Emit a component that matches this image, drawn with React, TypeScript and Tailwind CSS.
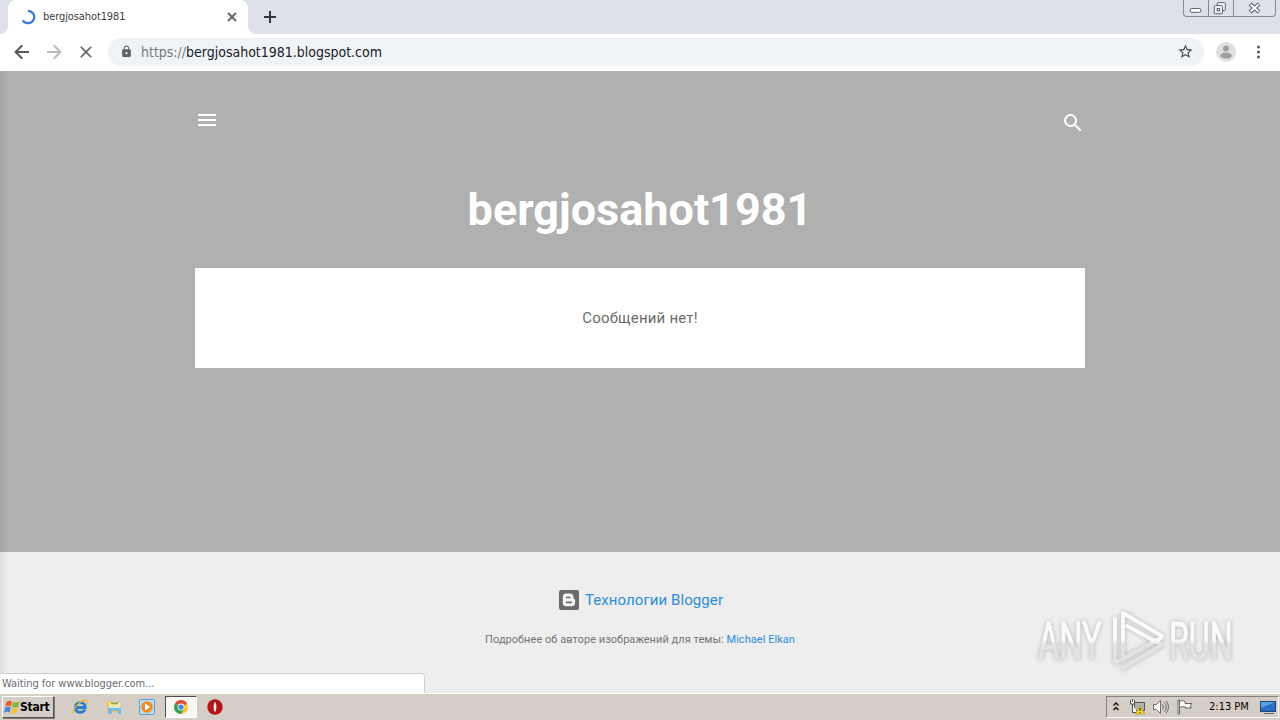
import React from 'react';
import clsx from 'clsx';
import { MdClose, MdLock, MdMenu, MdSearch, MdStarBorder } from 'react-icons/md';

const UI_FONT = "font-['DejaVu_Sans_Condensed','DejaVu_Sans',sans-serif]";

const TabStrip: React.FC = () => (
  <div className="flex h-[34px] bg-[#dee1e8]">
    <div className="w-2 bg-white">
      <div className="h-full rounded-br-lg bg-[#dee1e8]" />
    </div>
    <div className="flex w-[240px] items-center rounded-t-lg bg-white pl-3 pr-[11px]">
      <svg className="h-4 w-4" viewBox="0 0 16 16" fill="none">
        <path d="M8 1.800a6.200 6.200 0 1 1-5.200 9.600" stroke="#3b78d8" strokeWidth="2.200" />
      </svg>
      <span className="ml-[7px] flex-1 pt-px text-[11px] tracking-[-0.1px] text-[#3c4043]">bergjosahot1981</span>
      <svg className="h-[10px] w-[10px]" viewBox="0 0 10 10">
        <path d="M1 1l8 8M9 1L1 9" stroke="#5f6368" strokeWidth="1.800" />
      </svg>
    </div>
    <div className="w-2 bg-white">
      <div className="h-full rounded-bl-lg bg-[#dee1e8]" />
    </div>
    <svg className="ml-[8px] mt-[11px] h-3 w-3" viewBox="0 0 12 12">
      <path d="M6 0v12M0 6h12" stroke="#33363d" strokeWidth="2" />
    </svg>
    <div className="ml-auto mr-1 flex h-[17px] w-[93px] rounded-b-[4px] border border-t-0 border-[#858990]">
      <div className="w-[25px] border-r border-[#858990]">
        <svg className="h-4 w-full" viewBox="0 0 25 16" fill="none">
          <rect x="6.500" y="8.500" width="11" height="4" rx="1.500" fill="#fff" stroke="#555a66" />
        </svg>
      </div>
      <div className="w-[25px] border-r border-[#858990]">
        <svg className="h-4 w-full" viewBox="0 0 25 16" stroke="#555a66" fill="#f5f6f8">
          <rect x="8.500" y="2.500" width="8.500" height="8" rx="1" />
          <rect x="5.500" y="5.500" width="8.500" height="8.500" rx="1" />
          <rect x="8.500" y="8.500" width="2.500" height="2.500" />
        </svg>
      </div>
      <svg className="h-4 flex-1" viewBox="0 0 41 16">
        <path d="M16 4l9 8M25 4l-9 8" stroke="#555a66" strokeWidth="4.200" />
        <path d="M16.500 4.500l8 7M24.500 4.500l-8 7" stroke="#fff" strokeWidth="2.200" />
      </svg>
    </div>
  </div>
);

const Toolbar: React.FC = () => (
  <div className="flex h-[37px] items-center bg-white pb-0.5 pl-3">
    <svg className="h-5 w-5" viewBox="0 0 20 20" fill="none">
      <path d="M17 10H4M10.300 3.300L3.600 10l6.700 6.700" stroke="#55585c" strokeWidth="2" />
    </svg>
    <svg className="ml-3 h-5 w-5" viewBox="0 0 20 20" fill="none">
      <path d="M3 10h13M9.700 3.300l6.700 6.700-6.700 6.700" stroke="#b9bbbe" strokeWidth="2" />
    </svg>
    <MdClose className="ml-3 h-5 w-5 text-[#5f6368]" />
    <div className="ml-3 flex h-7 w-[1096px] items-center rounded-full bg-[#f0f3f6] pl-3 pr-[10px]">
      <MdLock className="h-[13px] w-[13px] text-[#5f6368]" />
      <span className="ml-2 flex-1 pt-px text-[14px] tracking-[-0.01px] text-[#202124]">
        <span className="text-[#777b80]">https://</span>bergjosahot1981.blogspot.com
      </span>
      <MdStarBorder className="h-[17px] w-[17px] text-[#45484d]" />
    </div>
    <svg className="ml-[12px] h-5 w-5" viewBox="0 0 20 20">
      <circle cx="10" cy="10" r="10" fill="#dfe0e1" />
      <circle cx="10" cy="6.500" r="3" fill="#9d9fa1" />
      <ellipse cx="10" cy="13.600" rx="5.800" ry="3" fill="#9d9fa1" />
    </svg>
    <svg className="ml-[19px] h-[14px] w-[6px]" viewBox="0 0 6 14" fill="#55585d">
      <circle cx="3.500" cy="2" r="1.500" />
      <circle cx="3.500" cy="7" r="1.500" />
      <circle cx="3.500" cy="12" r="1.500" />
    </svg>
  </div>
);

const Watermark: React.FC = () => (
  <svg
    className="absolute left-[1030px] top-[602px] h-[76px] w-[212px] overflow-visible drop-shadow-[0_0_2px_rgba(0,0,0,0.25)]"
    viewBox="0 0 212 76"
    fill="none"
  >
    <defs>
      <linearGradient id="wm-mark" x1="0" y1="0" x2="0" y2="76" gradientUnits="userSpaceOnUse">
        <stop offset="0.500" stopColor="#fafafa" />
        <stop offset="0.560" stopColor="#e2e2e2" />
      </linearGradient>
      {/* same split as wm-mark, measured from the text baseline */}
      <linearGradient id="wm-text" x1="0" y1="-57" x2="0" y2="19" gradientUnits="userSpaceOnUse">
        <stop offset="0.500" stopColor="#fafafa" />
        <stop offset="0.560" stopColor="#e2e2e2" />
      </linearGradient>
    </defs>
    <g fill="url(#wm-text)" stroke="url(#wm-text)" fontFamily="Roboto, sans-serif" fontSize="51">
      <text transform="translate(8 57) scale(0.650 1)" textLength="98" lengthAdjust="spacingAndGlyphs">ANY</text>
      <text transform="translate(139 57) scale(0.650 1)" textLength="98" lengthAdjust="spacingAndGlyphs">RUN</text>
    </g>
    <path
      d="M93 54V11l39 23M85 17v44l46-25M93 66l39-23-35-19"
      stroke="url(#wm-mark)"
      strokeWidth="4"
      strokeLinecap="round"
      strokeLinejoin="round"
    />
  </svg>
);

const BlogPage: React.FC = () => (
  <div className="relative flex h-[622px] flex-col font-['Roboto',sans-serif]">
    <main className="h-[481px] bg-[#b0b0b0]">
      <div className="mx-auto w-[890px]">
        <div className="flex h-[115px] items-start justify-between pt-[37px] text-white">
          <MdMenu className="h-6 w-6" />
          <MdSearch className="mt-[3px] h-6 w-6" />
        </div>
        <h1 className="h-[82px] text-center text-[45px] font-bold leading-[48px] text-white">bergjosahot1981</h1>
        <div className="flex h-[100px] items-center justify-center bg-white text-[15px] tracking-[0.2px] text-[#6b6b6b]">
          Сообщений нет!
        </div>
      </div>
    </main>
    <footer className="flex flex-1 flex-col items-center bg-[#eee] pt-9">
      <div className="flex h-6 items-center text-[15px] tracking-[0.08px] text-[#2c8dd8]">
        <svg className="mr-[4px] h-6 w-6" viewBox="0 0 24 24">
          <rect x="2" y="2" width="20" height="20" rx="2" fill="#6b6b6b" />
          <path d="M9 5.500h4a3.500 3.500 0 0 1 3.500 3.500v1c0 .7.300 1 .9 1.100.500.100.700.400.700.900v2.500a3.700 3.700 0 0 1-3.700 3.700H9.300a3.500 3.500 0 0 1-3.500-3.500V8.800A3.300 3.300 0 0 1 9 5.500z" fill="#f3f3f3" />
          <path d="M9.700 9.500h3M9.700 14.300h4.600" stroke="#6b6b6b" strokeWidth="1.700" strokeLinecap="round" />
        </svg>
        <span>Технологии Blogger</span>
      </div>
      <p className="mt-5 text-[11px] leading-4 tracking-[0.04px] text-[#757575]">
        Подробнее об авторе изображений для темы: <span className="text-[#2c8dd8]">Michael Elkan</span>
      </p>
    </footer>
    <div className="absolute inset-y-0 left-0 w-2 bg-linear-to-r from-black/6 to-transparent" />
    <div
      className={clsx(
        'absolute bottom-0 left-0 flex h-5 w-[425px] items-center rounded-tr border-r border-t border-[#cfcfcf] bg-white pl-[2px] pt-px text-[11px] tracking-[-0.05px] text-[#6a6c70]',
        UI_FONT
      )}
    >
      Waiting for www.blogger.com...
    </div>
  </div>
);

const WindowsLogo: React.FC = () => (
  <svg className="h-4 w-4" viewBox="0 0 16 16">
    <path d="M2.500 3Q5 1 8 2.500L7 7.500Q4 6 1.200 8z" fill="#e8602c" />
    <path d="M9 3q3 1.300 6.500-.5L14 7.700Q11 9.300 8 8z" fill="#83b83e" />
    <path d="M1 9q3-2 5.800-.5l-1 5Q3 12 0 14z" fill="#4787d5" />
    <path d="M7.800 9q3 1.300 6-.4l-1.200 5.200Q10 15.500 6.800 14z" fill="#f6c52f" />
  </svg>
);

const InternetExplorer: React.FC = () => (
  <svg className="h-4 w-4" viewBox="0 0 16 16" fill="none">
    <path d="M3.500 8.500h9.700c0-6.500-9.700-6.500-9.700 0 0 6 7.500 6 9.300 2" stroke="#257fce" strokeWidth="2.900" />
    <path d="M1.500 14.500C-1 12 9-.5 14.500 1.500c1.200.7.500 2.500-.5 4" stroke="#e9b42c" strokeWidth="1.300" />
  </svg>
);

const Explorer: React.FC = () => (
  <svg className="h-4 w-4" viewBox="0 0 16 16">
    <path d="M1 2h5l1 1h6v10H1z" fill="#e9c95b" />
    <path d="M3 4h11v8H3z" fill="#f9e99b" />
    <path d="M5 4.500h7" stroke="#76ad67" strokeWidth="1.500" />
    <path d="M2 8h13v7h-3v-3H6v3H2z" fill="#7ab9df" />
    <path d="M2.500 8.500h12" stroke="#c7e6f5" />
  </svg>
);

const MediaPlayer: React.FC = () => (
  <svg className="h-4 w-4" viewBox="0 0 16 16">
    <rect x="0.500" y="0.500" width="15" height="15" rx="1" fill="#b9dcf3" stroke="#5d9fcb" />
    <circle cx="8" cy="8" r="5.800" fill="#f28a1c" />
    <path d="M6 4.500l5.500 3.500L6 11.500z" fill="#fff" />
  </svg>
);

const Chrome: React.FC = () => (
  <svg className="h-[14px] w-[14px]" viewBox="0 0 16 16">
    <circle cx="8" cy="8" r="8" fill="#f5c72b" />
    <path d="M8 8L1.100 4A8 8 0 0 1 14.900 4z" fill="#de4b3c" />
    <path d="M8 8L1.100 4A8 8 0 0 0 8 16l3.500-6z" fill="#33a055" />
    <circle cx="8" cy="8" r="3.900" fill="#fff" />
    <circle cx="8" cy="8" r="3" fill="#4384ec" />
  </svg>
);

const Opera: React.FC = () => (
  <svg className="h-4 w-4" viewBox="0 0 16 16">
    <circle cx="8" cy="8" r="7.700" fill="#b7151d" />
    <ellipse cx="8" cy="8" rx="2" ry="5.500" fill="#f5e2e1" stroke="#8b0e14" />
  </svg>
);

const Tray: React.FC = () => (
  <div className="ml-auto flex h-[22px] w-[173px] items-center border border-b-white border-l-[#87827b] border-r-white border-t-[#87827b] pl-[5px]">
    <svg className="h-3 w-[8px]" viewBox="0 0 8 12" fill="none" stroke="#111" strokeWidth="1.400">
      <path d="M1.500 4.500L4 2l2.500 2.500M1.500 9L4 6.500 6.500 9" />
    </svg>
    <svg className="ml-[9px] h-4 w-4" viewBox="0 0 16 16">
      <rect x="5.500" y="3.500" width="10" height="8" fill="#b0b2b0" stroke="#595959" />
      <path d="M1.500 1v4h4V1M3.500 0v3M3.500 5v8.500H8" fill="#fff" stroke="#505050" />
      <path d="M11 6.500l4.800 8.500H6.500z" fill="#f8dc26" stroke="#ac9018" strokeWidth="0.700" />
      <path d="M11 9v3M11 13v1" stroke="#333" strokeWidth="1.200" />
    </svg>
    <svg className="ml-2 h-4 w-4" viewBox="0 0 16 16" fill="none" stroke="#6d6d6d">
      <path d="M.5 5.500h3l4-4v13l-4-4h-3z" fill="#fff" />
      <path d="M9.500 5.500q2 2.500 0 5M11.500 3.500q3.500 4.500 0 9M13.300 2q4.400 6 0 12" />
    </svg>
    <svg className="ml-2 h-4 w-4" viewBox="0 0 16 16" fill="#fff" stroke="#666">
      <path d="M1 1h1.500v14H1z" />
      <path d="M2.500 2.500q3-2 5.500 0v2h7l-2 2.500 1.500 2H8.500V8q-3-1-6 .5z" />
    </svg>
    <span className="ml-[16px] whitespace-nowrap pt-px text-[11px] text-black">2:13 PM</span>
    <svg className="ml-auto mr-[2px] h-4 w-4 shrink-0" viewBox="0 0 16 16">
      <rect x="0.500" y="2.500" width="15" height="10" fill="#286fc5" stroke="#1e4476" />
      <path d="M1 3h14L1 9z" fill="#5d9ee0" />
      <path d="M4 14.500h10" stroke="#686f79" />
    </svg>
  </div>
);

const Taskbar: React.FC = () => (
  <div className="flex h-[27px] items-center border-t border-white bg-[#d5cec7] pr-px">
    <div className="ml-[2px] flex h-[22px] w-[52px] items-center border border-b-[#55514d] border-l-white border-r-[#55514d] border-t-white pl-px shadow-[1px_1px_0_#817c76]">
      <WindowsLogo />
      <span className="text-[12px] font-bold tracking-[-0.25px] text-black">Start</span>
    </div>
    <div className="ml-[18px] flex items-center gap-[17.5px]">
      <InternetExplorer />
      <Explorer />
      <MediaPlayer />
    </div>
    <div className="ml-[10px] flex h-[22px] w-[32px] items-center justify-center border border-b-white border-l-[#514e4a] border-r-white border-t-[#514e4a] bg-[#f8f7f5]">
      <Chrome />
    </div>
    <div className="ml-[10px]">
      <Opera />
    </div>
    <Tray />
  </div>
);

export default function App() {
  return (
    <div className={clsx('relative h-[720px] w-[1280px] overflow-hidden', UI_FONT)}>
      <TabStrip />
      <Toolbar />
      <BlogPage />
      <Taskbar />
      <Watermark />
    </div>
  );
}
